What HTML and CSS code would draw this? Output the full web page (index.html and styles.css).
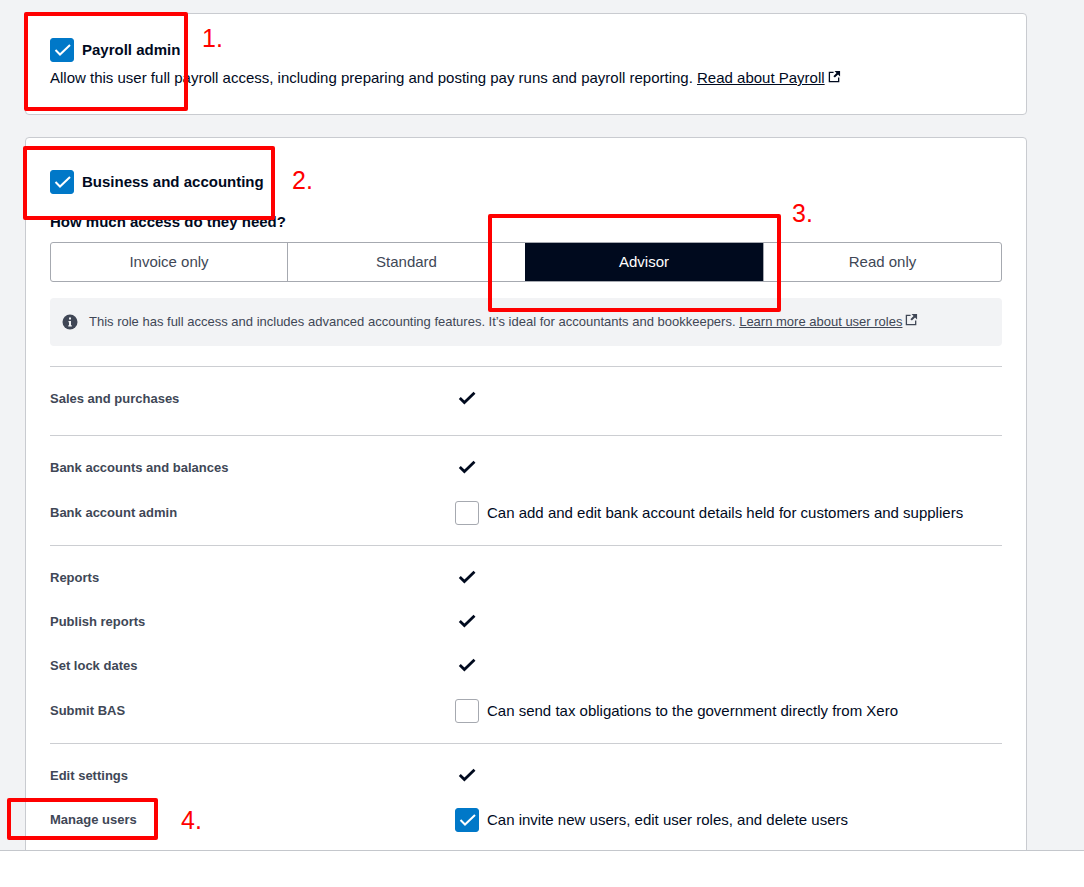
FILE: index.html
```html
<!DOCTYPE html>
<html lang="en">
<head>
<meta charset="utf-8">
<title>User roles</title>
<link rel="stylesheet" href="styles.css">
</head>
<body>
<svg class="defs" width="0" height="0" aria-hidden="true">
  <symbol id="ext" viewBox="0 0 14 14"><path d="M6 2.5H1.500v10h10V8" fill="none" stroke="currentColor" stroke-width="1.4"/><path d="M7 1h6v6l-2.200-2.200L7.400 8.200 5.800 6.600 9.200 3.200z" fill="currentColor"/></symbol>
  <symbol id="tick" viewBox="0 0 18 16"><path d="M1.800 8l4.600 4.600L16.500 2.800" fill="none" stroke="currentColor" stroke-width="2.800"/></symbol>
  <symbol id="boxtick" viewBox="0 0 24 24"><path d="M5.500 12l4.500 4.500L20 7" fill="none" stroke="currentColor" stroke-width="2"/></symbol>
</svg>
<main class="page">
  <section class="card card-payroll">
    <div class="head">
      <span class="box on"><svg width="24" height="24"><use href="#boxtick"/></svg></span>
      <strong>Payroll admin</strong>
    </div>
    <p class="desc">Allow this user full payroll access, including preparing and posting pay runs and payroll reporting. <a href="#">Read about Payroll</a><svg class="ext" width="13" height="13"><use href="#ext"/></svg></p>
  </section>

  <section class="card card-biz">
    <div class="head">
      <span class="box on"><svg width="24" height="24"><use href="#boxtick"/></svg></span>
      <strong>Business and accounting</strong>
    </div>
    <h3 class="question">How much access do they need?</h3>
    <div class="segments">
      <div class="seg">Invoice only</div>
      <div class="seg">Standard</div>
      <div class="seg active">Advisor</div>
      <div class="seg">Read only</div>
    </div>
    <div class="note">
      <svg class="info" width="16" height="16" viewBox="0 0 16 16"><circle cx="8" cy="8" r="7.500" fill="currentColor"/><path d="M7 3.500h2v2H7zM6.500 7H9v4.200h.8V12.500H6.300v-1.300H7V8.200h-.5z" fill="#f2f3f5"/></svg>
      <p>This role has full access and includes advanced accounting features. It’s ideal for accountants and bookkeepers. <a href="#">Learn more about user roles</a><svg class="ext" width="13" height="13"><use href="#ext"/></svg></p>
    </div>

    <div class="group group-solo">
      <div class="row"><span class="label">Sales and purchases</span><svg class="tick" width="18" height="16"><use href="#tick"/></svg></div>
    </div>
    <div class="group">
      <div class="row"><span class="label">Bank accounts and balances</span><svg class="tick" width="18" height="16"><use href="#tick"/></svg></div>
      <div class="row row-box"><span class="label">Bank account admin</span><span class="box"></span><span class="opt">Can add and edit bank account details held for customers and suppliers</span></div>
    </div>
    <div class="group">
      <div class="row"><span class="label">Reports</span><svg class="tick" width="18" height="16"><use href="#tick"/></svg></div>
      <div class="row"><span class="label">Publish reports</span><svg class="tick" width="18" height="16"><use href="#tick"/></svg></div>
      <div class="row"><span class="label">Set lock dates</span><svg class="tick" width="18" height="16"><use href="#tick"/></svg></div>
      <div class="row row-box"><span class="label">Submit BAS</span><span class="box"></span><span class="opt">Can send tax obligations to the government directly from Xero</span></div>
    </div>
    <div class="group group-last">
      <div class="row"><span class="label">Edit settings</span><svg class="tick" width="18" height="16"><use href="#tick"/></svg></div>
      <div class="row row-box"><span class="label">Manage users</span><span class="box on"><svg width="24" height="24"><use href="#boxtick"/></svg></span><span class="opt">Can invite new users, edit user roles, and delete users</span></div>
    </div>
  </section>
</main>
<footer class="strip"></footer>

<div class="mark m1"></div><span class="num n1">1.</span>
<div class="mark m2"></div><span class="num n2">2.</span>
<div class="mark m3"></div><span class="num n3">3.</span>
<div class="mark m4"></div><span class="num n4">4.</span>
</body>
</html>
```
FILE: styles.css
```css
* { box-sizing: border-box; }
html, body { margin: 0; height: 887px; overflow: hidden; background: #fff; }
body { position: relative; font-family: "Liberation Sans", Arial, sans-serif; color: #000a1e; }
.defs { position: absolute; }
.page { height: 851px; overflow: hidden; background: #f2f3f5; border-bottom: 1px solid #c4c7cc; padding: 13px 57px 0 25px; }
.card { background: #fff; border: 1px solid #c9cbd0; border-radius: 4px; padding: 24px 24px 0; }
.card-payroll { height: 102px; margin-bottom: 22px; }
.card-biz { height: 760px; padding-top: 32px; }
.head { display: flex; align-items: center; gap: 8px; height: 24px; font-size: 15px; }
.head strong { padding-bottom: 2px; }
.box { flex: none; width: 24px; height: 24px; border: 1px solid #a6a9b0; border-radius: 3px; background: #fff; display: block; }
.box.on { background: #0078c8; border-color: #0078c8; color: #fff; }
.box.on svg { display: block; margin: -1px; }
.desc { margin: 6px 0 0; font-size: 15px; line-height: 20px; }
a { color: inherit; text-decoration: underline; }
.ext { vertical-align: 0; margin-left: 3px; }
.question { margin: 18px 0 0; font-size: 15px; line-height: 20px; font-weight: 700; }
.segments { display: flex; height: 40px; margin-top: 10px; border: 1px solid #a6a9b0; border-radius: 3px; overflow: hidden; }
.seg { flex: 0 0 238px; display: flex; align-items: center; justify-content: center; padding-bottom: 2px; font-size: 15px; color: #404756; border-right: 1px solid #a6a9b0; }
.seg:first-child { flex-basis: 237px; }
.seg:last-child { flex: 1 1 0; border-right: 0; }
.seg.active { background: #000a1e; color: #fff; margin-left: -1px; flex-basis: 239px; }
.note { display: flex; align-items: center; gap: 11px; height: 48px; margin-top: 16px; padding: 0 12px; background: #f2f3f5; border-radius: 4px; font-size: 13px; color: #404756; }
.note p { margin: 0 0 2px; }
.info { flex: none; color: #404756; }
.group { border-top: 1px solid #ccced2; padding: 9px 0 10px; }
.note + .group { margin-top: 20px; }
.group-solo { padding-bottom: 15px; }
.row { display: flex; align-items: center; height: 44px; font-size: 13px; }
.row-box { height: 46px; }
.row-box .box { margin-top: 2px; }
.group-last .row-box .box { margin-top: 0; }
.group-last .row-box .opt, .group-last .row-box .label { margin-bottom: 2px; }
.label { flex: none; width: 405px; font-size: 13px; font-weight: 700; color: #404756; }
.tick { flex: none; margin-left: 3px; color: #000a1e; }
.opt { margin-left: 8px; font-size: 15px; }
.strip { height: 36px; background: #fff; }
.mark { position: absolute; border: 4px solid #ff0000; border-radius: 2px; }
.m1 { left: 24px; top: 12px; width: 164px; height: 99px; }
.m2 { left: 23px; top: 146px; width: 252px; height: 74px; }
.m3 { left: 488px; top: 214px; width: 293px; height: 98px; }
.m4 { left: 7px; top: 798px; width: 151px; height: 42px; }
.num { position: absolute; font-size: 25px; line-height: 28px; color: #ff0000; }
.n1 { left: 202px; top: 24px; }
.n2 { left: 292px; top: 166px; }
.n3 { left: 792px; top: 199px; }
.n4 { left: 181px; top: 806px; }
```
